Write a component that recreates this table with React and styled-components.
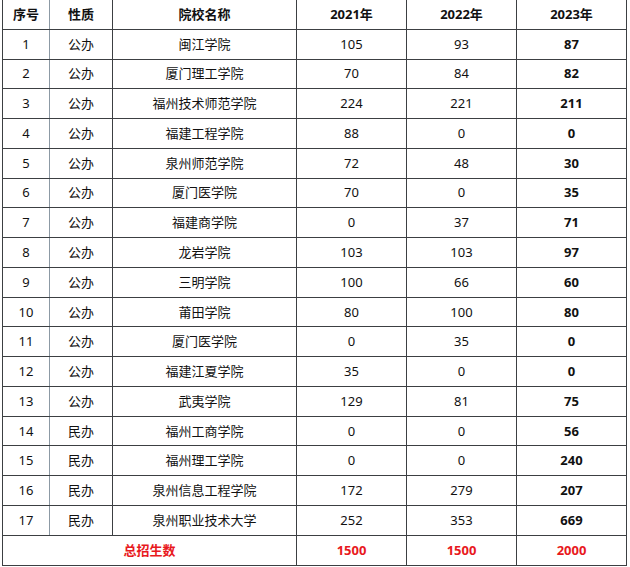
import React from "react";
import styled, { createGlobalStyle } from "styled-components";

const Global = createGlobalStyle`
  html, body { margin: 0; padding: 0; background: #fff; }
  body { font-family: "Noto Sans CJK SC", "Noto Sans", sans-serif; }
`;

const Wrap = styled.div`
  padding: 0 0 0 2px;
  margin-top: -1px;
`;

const Table = styled.table`
  border-collapse: collapse;
  table-layout: fixed;
  width: 625px;
  font-family: "Noto Sans", "Noto Sans CJK SC", sans-serif;
  font-size: 13px;
  color: #111;
`;

const Row = styled.tr`
  height: 29.78px;
`;

const Cell = styled.td`
  border: 1px solid #3c3f42;
  ${(p) => (p.$soft ? "border-right-color: #8c99a4;" : "")}
  text-align: center;
  vertical-align: middle;
  padding: 0;
  line-height: 1;
  font-weight: ${(p) => (p.$bold ? 700 : 400)};
  color: ${(p) => (p.$red ? "#e81820" : "#111")};
`;

const Head = styled(Cell).attrs({ as: "th" })`
  font-weight: 700;
  color: #111;
`;

const widths = [47, 63, 184, 110, 110, 110];

const rows = [
  [1, "公办", "闽江学院", 105, 93, 87],
  [2, "公办", "厦门理工学院", 70, 84, 82],
  [3, "公办", "福州技术师范学院", 224, 221, 211],
  [4, "公办", "福建工程学院", 88, 0, 0],
  [5, "公办", "泉州师范学院", 72, 48, 30],
  [6, "公办", "厦门医学院", 70, 0, 35],
  [7, "公办", "福建商学院", 0, 37, 71],
  [8, "公办", "龙岩学院", 103, 103, 97],
  [9, "公办", "三明学院", 100, 66, 60],
  [10, "公办", "莆田学院", 80, 100, 80],
  [11, "公办", "厦门医学院", 0, 35, 0],
  [12, "公办", "福建江夏学院", 35, 0, 0],
  [13, "公办", "武夷学院", 129, 81, 75],
  [14, "民办", "福州工商学院", 0, 0, 56],
  [15, "民办", "福州理工学院", 0, 0, 240],
  [16, "民办", "泉州信息工程学院", 172, 279, 207],
  [17, "民办", "泉州职业技术大学", 252, 353, 669],
];

export default function App() {
  return (
    <>
      <Global />
      <Wrap>
        <Table>
          <colgroup>
            {widths.map((w, i) => (
              <col key={i} style={{ width: w }} />
            ))}
          </colgroup>
          <thead>
            <Row>
              <Head $soft>序号</Head>
              <Head>性质</Head>
              <Head>院校名称</Head>
              <Head>2021年</Head>
              <Head>2022年</Head>
              <Head>2023年</Head>
            </Row>
          </thead>
          <tbody>
            {rows.map((r) => (
              <Row key={r[0]}>
                <Cell $soft>{r[0]}</Cell>
                <Cell>{r[1]}</Cell>
                <Cell>{r[2]}</Cell>
                <Cell>{r[3]}</Cell>
                <Cell>{r[4]}</Cell>
                <Cell $bold>{r[5]}</Cell>
              </Row>
            ))}
            <Row>
              <Cell colSpan={3} $red $bold>总招生数</Cell>
              <Cell $red $bold>1500</Cell>
              <Cell $red $bold>1500</Cell>
              <Cell $red $bold>2000</Cell>
            </Row>
          </tbody>
        </Table>
      </Wrap>
    </>
  );
}
